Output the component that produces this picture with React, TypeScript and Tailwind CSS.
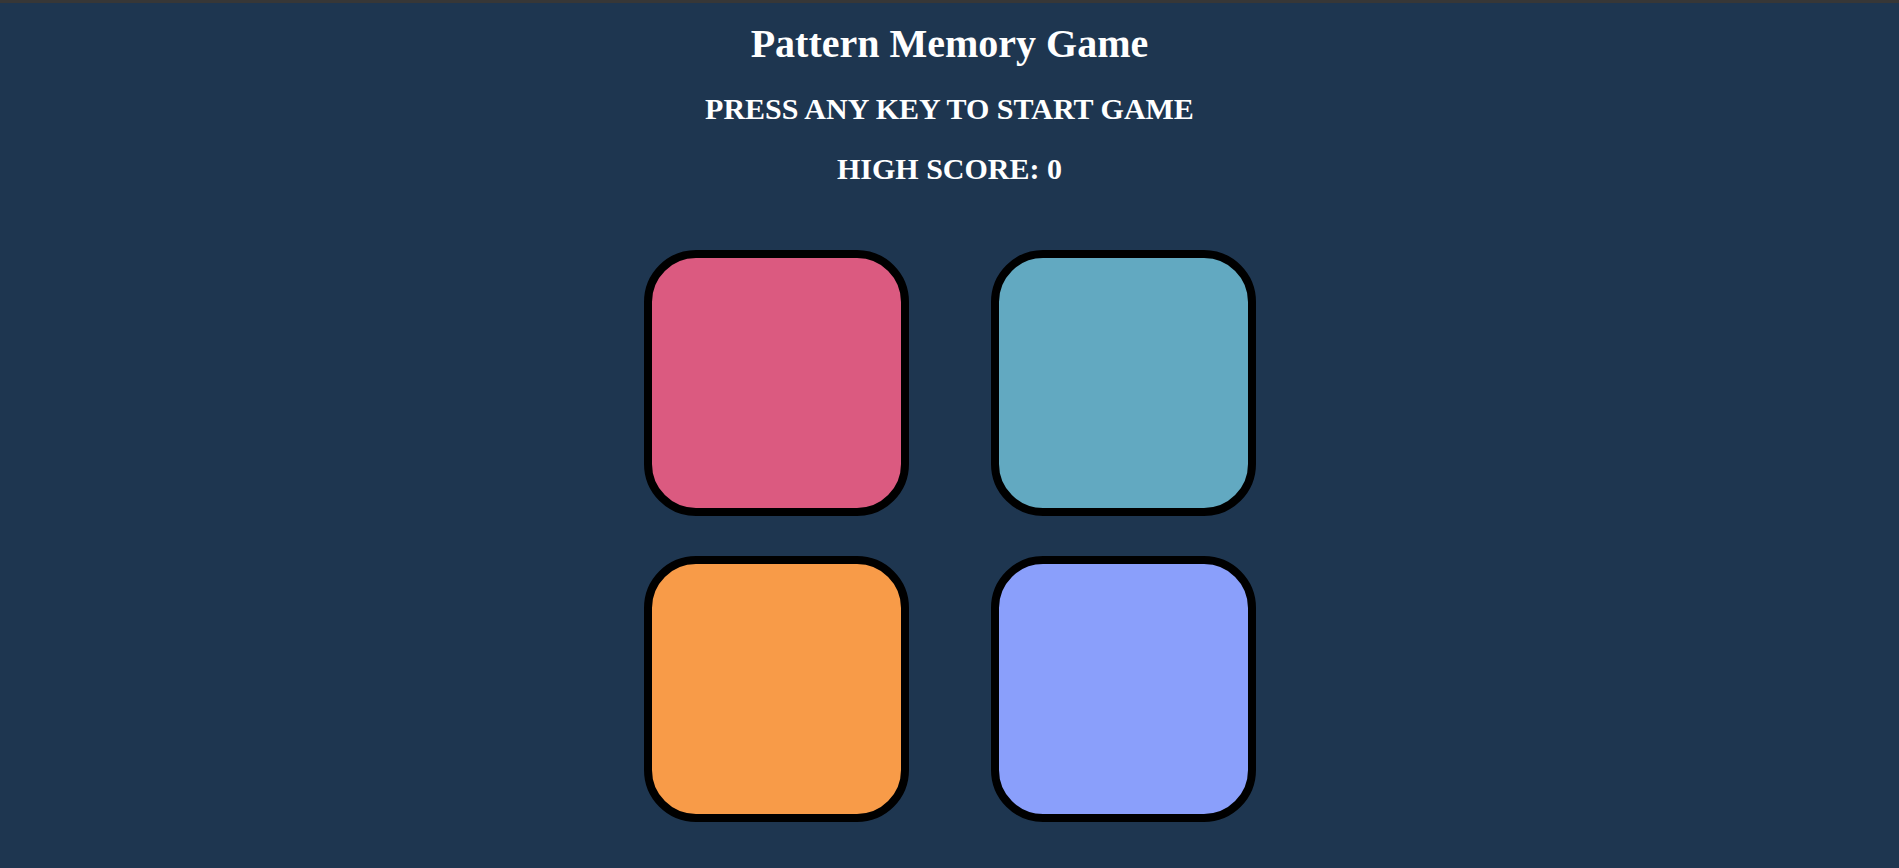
export default function App() {
  const pads = ['bg-[#db5a80]', 'bg-[#62a9c1]', 'bg-[#f89b48]', 'bg-[#8a9ffb]'];

  return (
    <div className="min-h-[868px] bg-[#1e3650] font-['Liberation_Serif','Times_New_Roman',serif] font-bold text-white">
      <div className="h-[3px] bg-[#373737]" />

      {/* Header */}
      <div className="flex flex-col items-center">
        <h1 className="mt-[21px] text-[40px] leading-none">Pattern Memory Game</h1>
        <h2 className="mt-[30px] text-[30px] leading-none">PRESS ANY KEY TO START GAME</h2>
        <h3 className="mt-[30px] text-[30px] leading-none">HIGH SCORE: 0</h3>
      </div>

      {/* Pads */}
      <div className="mt-[66px] grid grid-cols-[265px_265px] justify-center gap-x-[82px] gap-y-[40px]">
        {pads.map((c) => (
          <button
            key={c}
            type="button"
            className={`h-[266px] w-[265px] rounded-[52px] border-[8px] border-black ${c}`}
          />
        ))}
      </div>
    </div>
  );
}
